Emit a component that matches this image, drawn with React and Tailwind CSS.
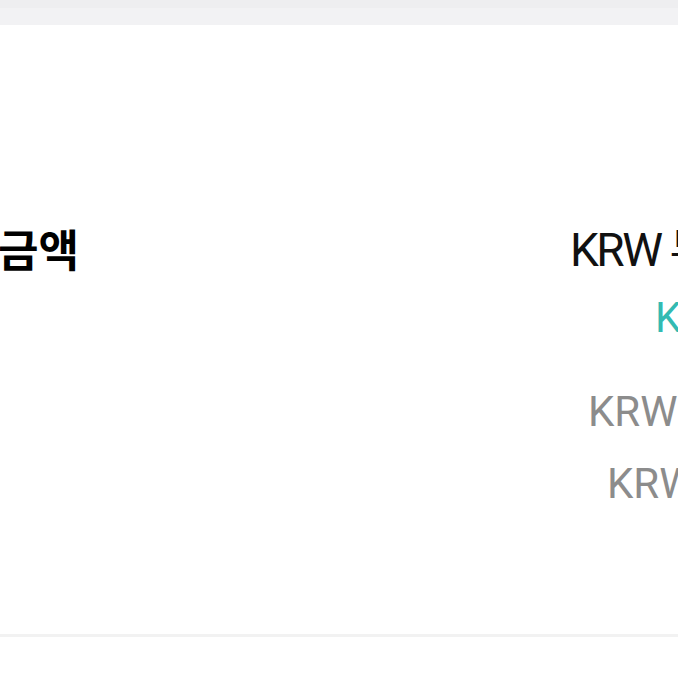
export default function App() {
  return (
    <div className="w-full h-[678px] overflow-hidden bg-white" style={{ fontFamily: 'Roboto, "Noto Sans CJK KR", sans-serif' }}>
      <div className="h-[8px] bg-[#eeeef0]" />
      <div className="h-[17px] bg-[#f2f2f4]" />
      <div className="h-[609px] flex">
        <div className="w-[570px] shrink-0 pt-[195px]">
          <h2 className="ml-[-2px] text-[44px] leading-[56px] font-bold text-black whitespace-nowrap" style={{ fontFamily: '"Noto Sans CJK KR", sans-serif' }}>
            금액
          </h2>
        </div>
        <div className="flex flex-col pt-[197px] whitespace-nowrap">
          <p className="text-[46px] leading-[56px] tracking-[-2.5px] text-[#111111]">KRW 무료</p>
          <p className="ml-[85px] mt-[14px] text-[42px] leading-[52px] text-[#33bab2]">KRW 0</p>
          <p className="ml-[18px] mt-[42px] text-[42px] leading-[52px] text-[#8c8c8c]">KRW 0</p>
          <p className="ml-[37px] mt-[20px] text-[42px] leading-[52px] text-[#8c8c8c]">KRW 0</p>
        </div>
      </div>
      <div className="h-[3px] bg-[#f2f2f2]" />
    </div>
  );
}
